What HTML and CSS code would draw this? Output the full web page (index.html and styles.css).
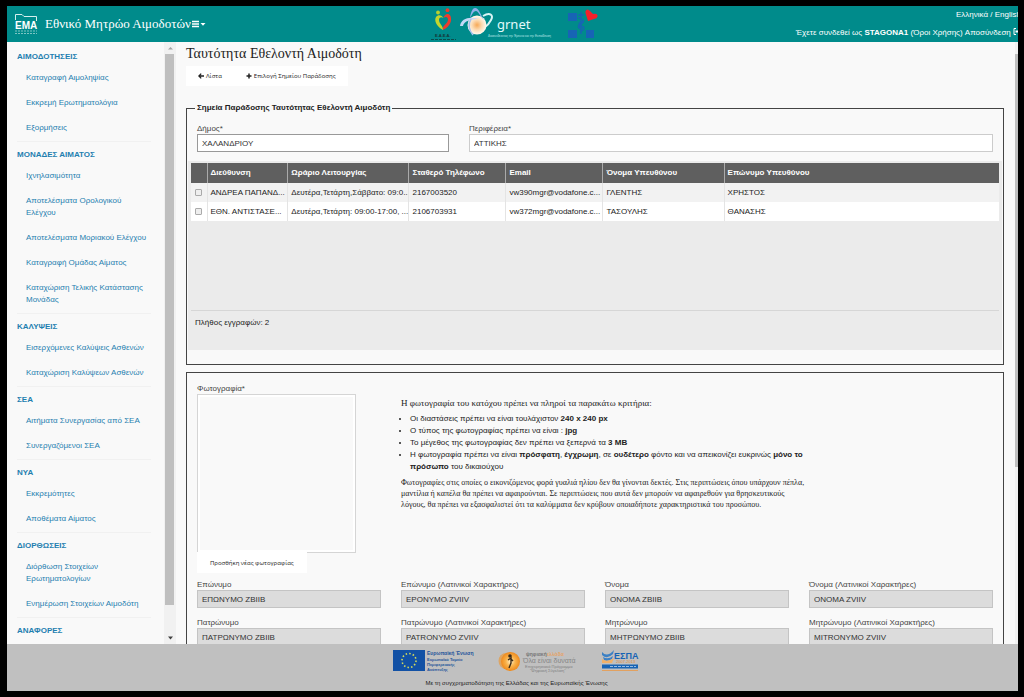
FILE: index.html
```html
<!DOCTYPE html>
<html lang="el">
<head>
<meta charset="utf-8">
<title>Εθνικό Μητρώο Αιμοδοτών</title>
<link rel="stylesheet" href="styles.css">
</head>
<body>
<div class="app">
  <header class="topbar">
    <div class="brand">
      <svg class="brand-logo" viewBox="0 0 24 22" role="img" aria-label="ΕΜΑ">
        <path d="M1.500 7V1.500H8L10 3.500H22.500V8" fill="none" stroke="#d5efee" stroke-width="1"/>
        <text x="1" y="15.500" class="logo-ema">ΕΜΑ</text>
        <path d="M1 18H23M1 20.500H23" stroke="#7cc4c2" stroke-width="1" stroke-dasharray="2 1"/>
      </svg>
      <span class="brand-name">Εθνικό Μητρώο Αιμοδοτών</span>
      <button class="menu-button" type="button" aria-label="Μενού">
        <svg viewBox="0 0 14 8" width="14" height="8"><path d="M0 1.500H7M0 4H7M0 6.500H7" stroke="#fff" stroke-width="1.300"/><path d="M8.500 3H13.500L11 5.800Z" fill="#fff"/></svg>
      </button>
    </div>
    <div class="partners">
      <svg viewBox="0 0 172 34" width="172" height="34" role="img" aria-label="Συνεργάτες">
        <circle cx="8" cy="5.500" r="1.900" fill="#b8cf2e"/><circle cx="17.500" cy="3.200" r="1.900" fill="#ee3b2c"/>
        <path d="M13 23C6 19 4 13 6 10C8 7 12 8 13.500 11C11 9.500 9 10.500 9 13C9 17 13 18 13 23Z" fill="#c3d52d"/>
        <path d="M13 23C21 19 22 13 20.500 9C18 5 14 8 13.500 11C16 9 18 10 18 13C17 18 12 18 13 23Z" fill="#ee3b2c"/>
        <text x="5" y="29.500" class="logo-eaea">Ε.Α.Ε.Α.</text>
        <path d="M1 32.500H26" stroke="#0a4c4c" stroke-width="1" stroke-dasharray="3 1"/>
        <defs><radialGradient id="globe"><stop offset="0" stop-color="#f7a957"/><stop offset=".5" stop-color="#fbd9b0"/><stop offset="1" stop-color="#fffaf0"/></radialGradient></defs>
        <path d="M53 9C60 5 64 8 61 13C59 17 57 19 54 21" fill="none" stroke="#d8f4f5" stroke-width="2"/>
        <circle cx="47" cy="18" r="9.500" fill="url(#globe)"/>
        <path d="M40 11C41 4 43 1 45 1C49 1 50 7 54 13C50 9 48 4 46 4C43 4 42 8 40 11Z" fill="#8fb0ea"/>
        <path d="M30 19C31 11 40 9 49 12C41 12 34 14 33 19Z" fill="#c4d8f6"/>
        <path d="M41 12C38 17 39 23 43 28" fill="none" stroke="#a8c2ee" stroke-width="1.600"/>
        <text x="67" y="22" class="logo-grnet">grnet</text>
        <text x="58" y="29.500" class="logo-tagline">Διασυνδέοντας την Έρευνα και την Εκπαίδευση</text>
        <path d="M138 6h9v8h-9zM138 23h9v8h-9zM156 23h8v8h-8z" fill="#1764b5"/>
        <path d="M151 5V27M148 8h6M148 11q7 1 5 4t-4 3q-2 3 3 4M154 14q-7 2-4 5q6 1 3 4l-3 2" fill="none" stroke="#1764b5" stroke-width="1.400"/>
        <path d="M158 14L155.500 6Q155 2.500 158 2.500L160 4L163 7Q168 6 167.500 9.500Q167 11.500 164 12Z" fill="#f5202b"/>
      </svg>
    </div>
    <div class="account">
      <div><a href="#">Ελληνικά</a> / <a href="#">English</a></div>
      <div>Έχετε συνδεθεί ως <b>STAGONA1</b> (<a href="#">Όροι Χρήσης</a>) <a href="#">Αποσύνδεση
        <svg viewBox="0 0 8 7" width="8" height="7"><path d="M3 .5H1V6.500H3" fill="none" stroke="#fff"/><path d="M2.500 2.500H5V.5L8 3.500L5 6.500V4.500H2.500Z" fill="#fff"/></svg></a></div>
    </div>
  </header>

  <div class="workspace">
    <nav class="sidebar" aria-label="Κύριο μενού">
      <div class="menu">
        <section class="group"><h2>ΑΙΜΟΔΟΤΗΣΕΙΣ</h2><a href="#">Καταγραφή Αιμοληψίας</a><a href="#">Εκκρεμή Ερωτηματολόγια</a><a href="#">Εξορμήσεις</a></section>
        <section class="group"><h2>ΜΟΝΑΔΕΣ ΑΙΜΑΤΟΣ</h2><a href="#">Ιχνηλασιμότητα</a><a href="#">Αποτελέσματα Ορολογικού Ελέγχου</a><a href="#">Αποτελέσματα Μοριακού Ελέγχου</a><a href="#">Καταγραφή Ομάδας Αίματος</a><a href="#">Καταχώριση Τελικής Κατάστασης Μονάδας</a></section>
        <section class="group"><h2>ΚΑΛΥΨΕΙΣ</h2><a href="#">Εισερχόμενες Καλύψεις Ασθενών</a><a href="#">Καταχώριση Καλύψεων Ασθενών</a></section>
        <section class="group"><h2>ΣΕΑ</h2><a href="#">Αιτήματα Συνεργασίας από ΣΕΑ</a><a href="#">Συνεργαζόμενοι ΣΕΑ</a></section>
        <section class="group"><h2>ΝΥΑ</h2><a href="#">Εκκρεμότητες</a><a href="#">Αποθέματα Αίματος</a></section>
        <section class="group"><h2>ΔΙΟΡΘΩΣΕΙΣ</h2><a href="#">Διόρθωση Στοιχείων Ερωτηματολογίων</a><a href="#">Ενημέρωση Στοιχείων Αιμοδότη</a></section>
        <section class="group"><h2>ΑΝΑΦΟΡΕΣ</h2></section>
      </div>
      <div class="scrollbar" aria-hidden="true">
        <svg viewBox="0 0 12 12"><path d="M4 7.500H9L6.500 5Z" fill="#a3a3a3"/></svg>
        <span class="thumb"></span>
        <span class="track"></span>
        <svg viewBox="0 0 12 12"><path d="M4 4.500H9L6.500 7.500Z" fill="#404040"/></svg>
      </div>
    </nav>

    <main class="content">
      <h1>Ταυτότητα Εθελοντή Αιμοδότη</h1>
      <div class="toolbar">
        <button type="button"><svg viewBox="0 0 6 6" width="6" height="6"><path d="M6 3H1M3.200 .6L.8 3L3.200 5.400" fill="none" stroke="#222" stroke-width="1.300"/></svg>Λίστα</button>
        <button type="button"><svg viewBox="0 0 6 6" width="6" height="6"><path d="M3 .5V5.500M.5 3H5.500" stroke="#222" stroke-width="1.500"/></svg>Επιλογή Σημείου Παράδοσης</button>
      </div>

      <fieldset class="panel points">
        <legend>Σημεία Παράδοσης Ταυτότητας Εθελοντή Αιμοδότη</legend>
        <div class="fields">
          <div class="field span4"><label for="dimos">Δήμος*</label><input id="dimos" class="strong" value="ΧΑΛΑΝΔΡΙΟΥ"></div>
          <div class="field span8"><label for="region">Περιφέρεια*</label><input id="region" value="ΑΤΤΙΚΗΣ"></div>
        </div>
        <div class="grid-box">
          <div class="grid-view">
            <table>
              <colgroup><col class="c-check"><col class="c-addr"><col class="c-hours"><col class="c-phone"><col class="c-mail"><col class="c-name"><col></colgroup>
              <thead><tr><th></th><th>Διεύθυνση</th><th>Ωράριο Λειτουργίας</th><th>Σταθερό Τηλέφωνο</th><th>Email</th><th>Όνομα Υπευθύνου</th><th>Επώνυμο Υπευθύνου</th></tr></thead>
              <tbody>
                <tr><td><input type="checkbox" aria-label="Επιλογή πρώτου σημείου"></td><td>ΑΝΔΡΕΑ ΠΑΠΑΝΔ...</td><td>Δευτέρα,Τετάρτη,Σάββατο: 09:0...</td><td>2167003520</td><td>vw390mgr@vodafone.c...</td><td>ΓΛΕΝΤΗΣ</td><td>ΧΡΗΣΤΟΣ</td></tr>
                <tr><td><input type="checkbox" aria-label="Επιλογή δεύτερου σημείου"></td><td>ΕΘΝ. ΑΝΤΙΣΤΑΣΕ...</td><td>Δευτέρα,Τετάρτη: 09:00-17:00, ...</td><td>2106703931</td><td>vw372mgr@vodafone.c...</td><td>ΤΑΣΟΥΛΗΣ</td><td>ΘΑΝΑΣΗΣ</td></tr>
              </tbody>
            </table>
          </div>
          <p class="count">Πλήθος εγγραφών: 2</p>
        </div>
      </fieldset>

      <section class="panel person">
        <div class="photo-row">
          <div class="photo">
            <span class="photo-label">Φωτογραφία*</span>
            <div class="frame"></div>
            <button type="button">Προσθήκη νέας φωτογραφίας</button>
          </div>
          <div class="criteria">
            <h3>Η φωτογραφία του κατόχου πρέπει να πληροί τα παρακάτω κριτήρια:</h3>
            <ul>
              <li>Οι διαστάσεις πρέπει να είναι τουλάχιστον <b>240 x 240 px</b></li>
              <li>Ο τύπος της φωτογραφίας πρέπει να είναι : <b>jpg</b></li>
              <li>Το μέγεθος της φωτογραφίας δεν πρέπει να ξεπερνά τα <b>3 MB</b></li>
              <li>Η φωτογραφία πρέπει να είναι <b>πρόσφατη</b>, <b>έγχρωμη</b>, σε <b>ουδέτερο</b> φόντο και να απεικονίζει ευκρινώς <b>μόνο το πρόσωπο</b> του δικαιούχου</li>
            </ul>
            <p>Φωτογραφίες στις οποίες ο εικονιζόμενος φορά γυαλιά ηλίου δεν θα γίνονται δεκτές. Στις περιπτώσεις όπου υπάρχουν πέπλα, μαντίλια ή καπέλα θα πρέπει να αφαιρούνται. Σε περιπτώσεις που αυτά δεν μπορούν να αφαιρεθούν για θρησκευτικούς λόγους, θα πρέπει να εξασφαλιστεί ότι τα καλύμματα δεν κρύβουν οποιαδήποτε χαρακτηριστικά του προσώπου.</p>
          </div>
        </div>
        <div class="fields">
          <div class="field span3"><label for="f1">Επώνυμο</label><input id="f1" readonly value="ΕΠΩΝΥΜΟ ΖΒΙΙΒ"></div>
          <div class="field span3"><label for="f2">Επώνυμο (Λατινικοί Χαρακτήρες)</label><input id="f2" readonly value="EPONYMO ZVIIV"></div>
          <div class="field span3"><label for="f3">Όνομα</label><input id="f3" readonly value="ΟΝΟΜΑ ΖΒΙΙΒ"></div>
          <div class="field span3"><label for="f4">Όνομα (Λατινικοί Χαρακτήρες)</label><input id="f4" readonly value="ONOMA ZVIIV"></div>
          <div class="field span3"><label for="f5">Πατρώνυμο</label><input id="f5" readonly value="ΠΑΤΡΩΝΥΜΟ ΖΒΙΙΒ"></div>
          <div class="field span3"><label for="f6">Πατρώνυμο (Λατινικοί Χαρακτήρες)</label><input id="f6" readonly value="PATRONYMO ZVIIV"></div>
          <div class="field span3"><label for="f7">Μητρώνυμο</label><input id="f7" readonly value="ΜΗΤΡΩΝΥΜΟ ΖΒΙΙΒ"></div>
          <div class="field span3"><label for="f8">Μητρώνυμο (Λατινικοί Χαρακτήρες)</label><input id="f8" readonly value="MITRONYMO ZVIIV"></div>
        </div>
      </section>
    </main>
    <div class="page-scroll" aria-hidden="true"><span></span></div>
  </div>

  <footer class="footer">
    <div class="sponsors">
      <svg viewBox="0 0 85 22" width="85" height="22" role="img" aria-label="Ευρωπαϊκή Ένωση">
        <rect width="32" height="21" fill="#1251a5"/>
        <circle cx="16" cy="10.500" r="7" fill="none" stroke="#d5dc5b" stroke-width="1.600" stroke-dasharray="1.500 2.165"/>
        <text x="34" y="5" class="eu-title">Ευρωπαϊκή Ένωση</text>
        <text x="34" y="11" class="eu-sub">Ευρωπαϊκό Ταμείο</text>
        <text x="34" y="16" class="eu-sub">Περιφερειακής</text>
        <text x="34" y="21" class="eu-sub">Ανάπτυξης</text>
      </svg>
      <svg viewBox="0 0 84 23" width="84" height="23" role="img" aria-label="Ψηφιακή Ελλάδα">
        <defs><radialGradient id="sun"><stop offset="0" stop-color="#fff0c8"/><stop offset=".5" stop-color="#f9b24a"/><stop offset="1" stop-color="#ee8a1d"/></radialGradient></defs>
        <ellipse cx="8" cy="11" rx="7.500" ry="8" fill="#dca564"/>
        <circle cx="12.500" cy="11.500" r="9.500" fill="url(#sun)"/>
        <circle cx="12" cy="6" r="1.800" fill="#3a2a18"/>
        <path d="M10 10L13 8V13L11 18M13 9L15 11" fill="none" stroke="#3a2a18" stroke-width="1.400"/>
        <text x="28" y="6" class="dg-top">ψηφιακή<tspan class="dg-orange">ελλάδα</tspan></text>
        <text x="25" y="13" class="dg-main">Όλα είναι δυνατά</text>
        <text x="27" y="17.500" class="dg-sub">Επιχειρησιακό Πρόγραμμα</text>
        <text x="32" y="21.500" class="dg-sub">“Ψηφιακή Σύγκλιση”</text>
      </svg>
      <svg viewBox="0 0 37 22" width="37" height="22" role="img" aria-label="ΕΣΠΑ">
        <path d="M0 2Q5 8 12 0L11 4Q5 10 0 5ZM1 7Q6 10 11 6L10 9Q5 12 2 10Z" fill="#3d81c4"/>
        <path d="M0 9Q5 13 12 8L10 13H0Z" fill="#f0b169"/>
        <text x="12" y="9" class="espa">ΕΣΠΑ</text>
        <text x="14" y="13" class="espa-year">2007-2013</text>
        <path d="M0 16.500H36" stroke="#1764b5" stroke-width="4"/><path d="M8 16.500H34" stroke="#9abbe0" stroke-width="1" stroke-dasharray="3 1"/>
        <path d="M0 20.500H36" stroke="#e2a160" stroke-width="1"/>
      </svg>
    </div>
    <p>Με τη συγχρηματοδότηση της Ελλάδας και της Ευρωπαϊκής Ένωσης</p>
  </footer>
</div>
</body>
</html>
```
FILE: styles.css
```css
* { box-sizing: border-box; }
body {
  margin: 0;
  height: 100vh;
  padding: 6px;
  padding-left: 7px;
  background: #000;
  font: 8px/12px "Liberation Sans", Arial, sans-serif;
  color: #333;
}
h1, h2, h3, p, ul { margin: 0; padding: 0; }
a { color: inherit; text-decoration: none; }
button, input { font: inherit; color: inherit; }
button { border: 0; background: none; padding: 0; }

.app { height: 100%; display: flex; flex-direction: column; overflow: hidden; background: #f9f9f9; }

/* Top bar */
.topbar {
  flex: none;
  height: 36px;
  display: grid;
  grid-template-columns: 1fr auto 1fr;
  background: #008b8b;
  color: #fff;
}
.brand { display: flex; align-items: center; padding-left: 7px; }
.brand-logo { width: 24px; height: 22px; margin-right: 7px; }
.logo-ema { font: bold 10px "Liberation Sans", sans-serif; fill: #fff; }
.brand-name { font: 13px/18px "Liberation Serif", serif; white-space: nowrap; }
.menu-button { display: flex; margin-left: 1px; }
.partners { display: flex; align-items: center; padding-left: 6px; }
.partners svg { display: block; }
.logo-eaea { font: bold 4px "Liberation Sans", sans-serif; fill: #173434; }
.logo-grnet { font: 13px "Noto Sans", sans-serif; fill: #e2fafa; }
.logo-tagline { font: 3px "Liberation Sans", sans-serif; fill: #b8e4e4; }
.account {
  display: flex;
  flex-direction: column;
  gap: 6px;
  padding-top: 3px;
  margin-right: -3px;
  text-align: right;
  white-space: nowrap;
}

/* Sidebar */
.workspace { flex: 1; min-height: 0; display: flex; }
.sidebar { flex: none; width: 169px; display: flex; overflow: hidden; color: #1f7fb0; }
.menu { flex: 1; padding: 2px 13px 0 10px; }
.group { padding-top: 7px; border-bottom: 1px solid #f1f1f1; }
.group:last-child { border-bottom: 0; }
.group h2 { margin-bottom: 3px; font-size: 8px; line-height: 12px; }
.group a { display: block; padding: 6px 3px 7px 9px; }
.scrollbar { width: 12px; display: flex; flex-direction: column; background: #f1f1f1; }
.scrollbar svg { flex: none; width: 12px; height: 12px; }
.thumb { flex: 551; margin: 0 2px 0 1px; background: #bfbfbf; }
.track { flex: 27; }

/* Content */
.content { flex: 1; min-width: 0; overflow: hidden; padding: 3px 11px 0 10px; }
.content h1 { font: 14px/18px "Liberation Serif", serif; color: #222; }
.content button { font: 6px/12px "Open Sans", sans-serif; color: #222; background: #fff; }
.toolbar { display: flex; width: fit-content; margin-top: 3px; background: #fff; }
.toolbar button { display: flex; align-items: center; gap: 2px; height: 20px; padding: 0 12px; }
.panel { min-width: 0; margin: 0; padding: 0; border: 1px solid #444; }
.points { margin-top: 15px; height: 264px; }
.points legend { margin-left: 8px; padding: 0 2px; font-weight: bold; line-height: 14px; color: #222; }
.fields { display: grid; grid-template-columns: repeat(12, 1fr); gap: 9px 20px; padding: 0 10px; }
.points .fields { padding-top: 8px; }
.span3 { grid-column: span 3; }
.span4 { grid-column: span 4; }
.span8 { grid-column: span 8; }
.field label { display: block; line-height: 11px; color: #444; }
.field input {
  display: block;
  width: 100%;
  height: 18px;
  padding: 0 4px;
  border: 1px solid #ccc;
  border-radius: 0;
  background: #fff;
}
.field input.strong { border-color: #999; }
.field input[readonly] { background: #dcdcdc; border-color: #c4c4c4; }

.grid-box { margin: 9px 1px 0; padding: 2px 3px 0; height: 189px; background: #ebebeb; }
.grid-view { height: 148px; border-bottom: 1px solid #d6d6d6; }
table { width: 100%; table-layout: fixed; border-collapse: collapse; color: #222; }
.c-check { width: 16px; }
.c-addr { width: 10%; }
.c-hours, .c-name { width: 15%; }
.c-phone, .c-mail { width: 12%; }
th, td {
  height: 19px;
  padding: 0 0 0 3px;
  overflow: hidden;
  white-space: nowrap;
  text-align: left;
  border-right: 1px solid #e4e4e4;
}
th { height: 20px; background: #5f5f5f; color: #fff; border-right-color: #aaa; }
th:last-child, td:last-child { border-right: 0; }
tbody tr { background: #fff; }
tbody tr:first-child { background: #f2f2f2; }
td input {
  appearance: none;
  display: block;
  width: 7px;
  height: 7px;
  margin: 0 0 0 1px;
  border: 1px solid #aaa;
  border-radius: 1px;
  background: #eee;
}
.count { padding: 6px 4px; color: #222; }

/* Personal details */
.person { margin-top: 7px; height: 400px; padding-top: 11px; }
.photo-row { display: grid; grid-template-columns: repeat(4, 1fr); gap: 20px; padding: 0 10px; }
.photo-label { display: block; line-height: 10px; color: #444; }
.frame { width: 159px; aspect-ratio: 1; border: 1px solid #d5d5d5; box-shadow: inset 0 0 0 2px #fff; }
.photo button { display: block; height: 21px; margin-top: -1px; padding: 0 13px; }
.criteria { grid-column: span 2; margin-right: -20px; padding-top: 13px; color: #222; }
.criteria h3 { font: 9px/12px "Liberation Serif", serif; margin-bottom: 4px; }
.criteria ul { padding-left: 9px; }
.criteria p { margin-top: 4px; font: 8px/11px "Liberation Serif", serif; }
.person .fields { margin-top: 6px; }

.page-scroll { flex: none; width: 3px; padding-top: 12px; background: #f1f1f1; }
.page-scroll span { display: block; height: 70%; background: #bfbfbf; }

/* Footer */
.footer { flex: none; height: 47px; padding: 6px 0 0 8px; background: #c0c0c0; text-align: center; }
.sponsors { display: flex; justify-content: center; gap: 20px; height: 23px; padding-right: 2px; }
.footer p { margin-top: 4px; color: #222; font-size: 6px; }
.eu-title { font: bold 5px "Liberation Sans", sans-serif; fill: #24549a; }
.eu-sub { font: bold 4px "Liberation Sans", sans-serif; fill: #24549a; }
.dg-top { font: bold 5px "Liberation Sans", sans-serif; fill: #777; }
.dg-orange { fill: #e5a468; }
.dg-main { font: 7px "Liberation Sans", sans-serif; fill: #858585; }
.dg-sub { font: 4px "Liberation Sans", sans-serif; fill: #808080; }
.espa { font: bold 9px "Liberation Sans", sans-serif; fill: #1764b5; }
.espa-year { font: 4px "Liberation Sans", sans-serif; fill: #e08a35; }
```
